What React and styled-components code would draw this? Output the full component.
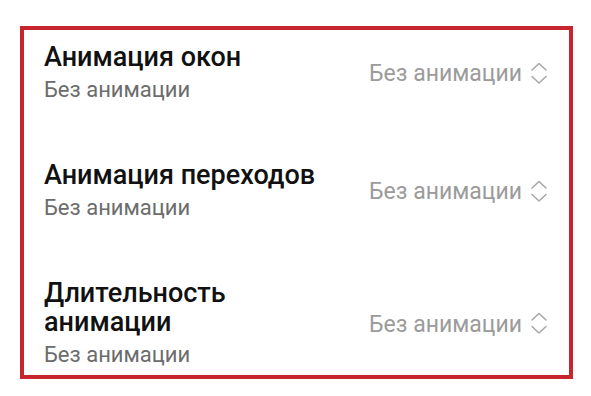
import React from 'react';
import styled, { createGlobalStyle } from 'styled-components';

const GlobalStyle = createGlobalStyle`
  html, body {
    margin: 0;
    padding: 0;
    background: #ffffff;
  }
  body {
    font-family: Roboto, "Noto Sans", "Liberation Sans", sans-serif;
  }
`;

const Page = styled.div`
  width: 591px;
  height: 396px;
  padding: 26px 18px 0 20px;
  box-sizing: border-box;
`;

const Frame = styled.div`
  width: 553px;
  height: 353px;
  box-sizing: border-box;
  border: 4px solid #c8262f;
  padding: 13px 22px 0 20px;
  display: flex;
  flex-direction: column;
  gap: 57px;
`;

const Row = styled.div`
  display: flex;
  align-items: center;
  gap: 20px;
`;

const Labels = styled.div`
  flex: 1;
  display: flex;
  flex-direction: column;
`;

const Title = styled.div`
  font-size: 27px;
  font-weight: 500;
  line-height: 29px;
  color: #111111;
`;

const Subtitle = styled.div`
  margin-top: 4px;
  font-size: 22px;
  line-height: 28px;
  color: #6c6c6c;
`;

const Value = styled.div`
  display: flex;
  align-items: center;
  gap: 9px;
  font-size: 23px;
  color: #9b9b9b;
  white-space: nowrap;
`;

const Chevrons = () => (
  <svg width="16" height="24" viewBox="0 0 16 24" fill="none">
    <path d="M1 8 L8 1.5 L15 8" stroke="#a6a6a6" strokeWidth="1.5" strokeLinecap="round" strokeLinejoin="round" />
    <path d="M1 14.5 L8 21 L15 14.5" stroke="#a6a6a6" strokeWidth="1.5" strokeLinecap="round" strokeLinejoin="round" />
  </svg>
);

const settings = [
  { title: 'Анимация окон', value: 'Без анимации' },
  { title: 'Анимация переходов', value: 'Без анимации' },
  { title: 'Длительность анимации', value: 'Без анимации' },
];

const App = () => (
  <>
    <GlobalStyle />
    <Page>
      <Frame>
        {settings.map((item) => (
          <Row key={item.title}>
            <Labels>
              <Title>{item.title}</Title>
              <Subtitle>{item.value}</Subtitle>
            </Labels>
            <Value>
              {item.value}
              <Chevrons />
            </Value>
          </Row>
        ))}
      </Frame>
    </Page>
  </>
);

export default App;
